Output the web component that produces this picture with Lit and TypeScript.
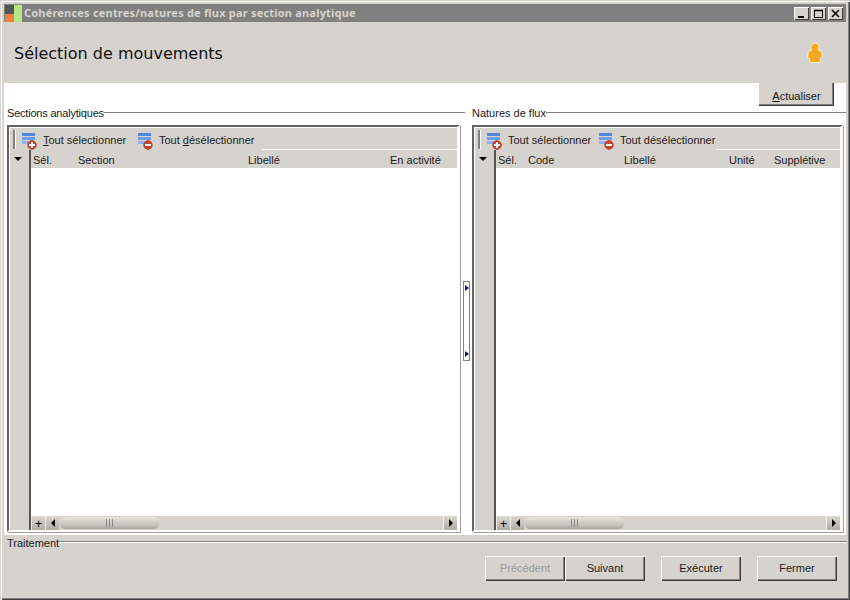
import { LitElement, html, css, svg } from "lit";
import { customElement } from "lit/decorators.js";

const addIcon = (kind: "plus" | "minus") => svg`
  <svg class="tool-icon" width="16" height="17" viewBox="0 0 16 17">
    <rect x="0" y="0" width="13" height="3" fill="#4f86e0"/>
    <rect x="0" y="4" width="13" height="3" fill="#6f9cec"/>
    <rect x="0" y="8" width="7" height="3" fill="#8fb2f0"/>
    <circle cx="10" cy="12" r="4.400" fill="#c8442a" stroke="#a83a20" stroke-width="0.6"/>
    <rect x="7" y="11" width="6" height="2" fill="#fff"/>
    ${kind === "plus" ? svg`<rect x="9" y="9" width="2" height="6" fill="#fff"/>` : ""}
  </svg>`;

@customElement("app-root")
export class AppRoot extends LitElement {
  static styles = css`
    :host { display: block; width: 850px; height: 600px; font-family: "Liberation Sans", sans-serif; font-size: 11px; color: #1a1a1a; }
    * { box-sizing: border-box; }
    .window {
      width: 850px; height: 600px; background: #d6d3ce; padding: 4px 4px 3px 4px;
      display: flex; flex-direction: column;
      box-shadow: inset 1px 1px #d6d3ce, inset 2px 2px #fff, inset -1px -1px #404040, inset -2px -2px #808080;
    }
    .titlebar { height: 18px; background: #808080; display: flex; align-items: center; flex: none; }
    .app-icon { flex: none; margin: 0 2px 0 1px; }
    .title { flex: 1; font: bold 11px "Noto Sans", sans-serif; letter-spacing: 0.2px; color: #d6d3ce; white-space: nowrap; padding-bottom: 2px; }
    .controls { display: flex; gap: 2px; margin-right: 3px; }
    .ctl { width: 15px; height: 13px; background: #d6d3ce; display: flex; align-items: center; justify-content: center; box-shadow: inset 1px 1px #fff, inset -1px -1px #404040; }
    .head { height: 61px; flex: none; display: flex; align-items: center; justify-content: space-between; padding: 0 22px 0 10px; }
    .head h1 { margin: 1px 0 0 0; font: normal 16px "DejaVu Sans", sans-serif; color: #111; }
    .body { height: 452px; flex: none; background: #fff; display: flex; flex-direction: column; }
    .actions { height: 23px; flex: none; display: flex; justify-content: flex-end; padding-right: 12px; }
    .btn { font: inherit; color: #1a1a1a; background: #d6d3ce; border: 0; padding: 0; display: flex; align-items: center; justify-content: center; }
    .u { text-decoration: underline; }
    .refresh { width: 75px; height: 23px; padding-top: 2px; box-shadow: inset -1px -1px #404040, inset -2px -2px #808080; }
    .panels { flex: 1; display: grid; grid-template-columns: 459px 7px 1fr; grid-template-rows: 19px 1fr; }
    .legend { display: flex; align-items: flex-start; white-space: nowrap; }
    .legend .rule { flex: 1; height: 1px; background: #808080; margin-top: 6px; }
    .legend.left { padding-left: 3px; margin-right: -2px; letter-spacing: -0.2px; }
    .legend.right { grid-column: 3; padding-left: 2px; }
    .frame {
      background: #d6d3ce; display: grid; grid-template-columns: 21px 1fr; grid-template-rows: 22px 18px 1fr; min-height: 0;
      border-top: 2px solid #646464; border-left: 2px solid #646464; border-right: 3px solid #fff; border-bottom: 2px solid #fff;
      padding: 1px 0 0 1px; background-clip: padding-box;
      box-shadow: 1px 1px #a0a0a0, inset 1px 1px #fff; height: 407px;
    }
    .frame.left { margin: 0 3px; }
    .frame.right { margin: 0 3px 0 2px; grid-column: 3; }
    .toolbar { grid-column: 1 / 3; display: flex; align-items: center; padding: 2px 0 0 3px; position: relative; white-space: nowrap; }
    .grip { height: 19px; background: #808080; border-right: 1px solid #fff; width: 3px; margin: -2px 6px 0 0; flex: none; }
    .tool { display: flex; align-items: center; gap: 5px; }
    .tool.a { width: 116px; }
    .frame.right .tool.a { width: 112px; }
    .tool .tool-icon { margin-top: 2px; flex: none; }
    .toolbar .fill { position: absolute; bottom: 0; right: 0; height: 1px; background: #fff; }
    .fill.l { left: 252px; }
    .fill.r { left: 241px; }
    .gutter { grid-row: 2 / 4; border-right: 2px solid #555; padding: 7px 0 0 4px; }
    .tri { width: 0; height: 0; border-left: 4px solid transparent; border-right: 4px solid transparent; border-top: 4px solid #000; }
    .cols { height: 18px; flex: none; display: grid; align-items: center; padding: 2px 0 0 2px; white-space: nowrap; }
    .cols.l { grid-template-columns: 45px 170px 142px 1fr; }
    .cols.r { grid-template-columns: 30px 96px 105px 45px 1fr; }
    .rows-wrap { grid-column: 2; background: #fff; display: flex; flex-direction: column; min-height: 0; }
    .rows { flex: 1; background: #fff; }
    .scroll { height: 14px; flex: none; background: #d6d3ce; display: flex; align-items: stretch; }
    .sbtn { width: 14px; flex: none; background: linear-gradient(#dcd9d2, #b0aca4); border-left: 1px solid #eee; display: flex; align-items: center; justify-content: center; font: 13px "Liberation Sans", sans-serif; color: #000; }
    .tl { width: 0; height: 0; border-top: 4px solid transparent; border-bottom: 4px solid transparent; border-right: 4px solid #000; }
    .tr { width: 0; height: 0; border-top: 4px solid transparent; border-bottom: 4px solid transparent; border-left: 4px solid #000; }
    .thumb { width: 99px; margin-left: 1px; flex: none; border-radius: 5px; background: linear-gradient(#e6e4de, #c4c0b8 70%, #a8a49c); display: flex; align-items: center; justify-content: center; gap: 2px; margin-top: 1px; height: 12px; }
    .thumb i { width: 1px; height: 8px; background: #8a8a8a; }
    .track { flex: 1; }
    .splitter { grid-row: 2; grid-column: 2; align-self: start; margin-top: 156px; width: 7px; height: 80px; border: 1px solid #808080; background: #fff; display: flex; flex-direction: column; justify-content: space-between; padding: 3px 0 3px 1px; }
    .nav { width: 0; height: 0; border-top: 3px solid transparent; border-bottom: 3px solid transparent; border-left: 4px solid #101060; }
    .foot { flex: 1; display: flex; flex-direction: column; }
    .foot .legend { height: 16px; padding-left: 3px; align-items: center; }
    .foot .rule { margin: -2px -1px 0 0; height: 2px; background: linear-gradient(#808080 50%, #fff 50%); }
    .foot-buttons { display: flex; justify-content: flex-end; margin-top: 5px; padding-right: 9px; }
    .fbtn { width: 80px; height: 25px; padding-bottom: 2px; box-shadow: inset 1px 1px #fff, inset -1px -1px #404040, inset -2px -2px #808080; }
    .fbtn + .fbtn { margin-left: 16px; }
    .fbtn.flush { margin-left: 0; }
    .fbtn:disabled { color: #9a9a94; }
    .legend-text { line-height: 14px; }
  `;

  private frame(side: "l" | "r", cols: string[], ul: boolean) {
    return html`
      <div class="frame ${side === "l" ? "left" : "right"}">
        <div class="toolbar">
          <div class="grip"></div>
          <div class="tool a">${addIcon("plus")}<span>${ul ? html`<span class="u">T</span>out sélectionner` : "Tout sélectionner"}</span></div>
          <div class="tool">${addIcon("minus")}<span>${ul ? html`Tout <span class="u">d</span>ésélectionner` : "Tout désélectionner"}</span></div>
          <div class="fill ${side}"></div>
        </div>
        <div class="gutter"><div class="tri"></div></div>
        <div class="cols ${side}">${cols.map((c) => html`<span>${c}</span>`)}</div>
        <div class="rows-wrap">
          <div class="rows"></div>
          <div class="scroll">
            <div class="sbtn">+</div>
            <div class="sbtn"><div class="tl"></div></div>
            <div class="thumb"><i></i><i></i><i></i></div>
            <div class="track"></div>
            <div class="sbtn"><div class="tr"></div></div>
          </div>
        </div>
      </div>`;
  }

  render() {
    return html`
      <div class="window">
        <div class="titlebar">
          <svg class="app-icon" width="17" height="17" viewBox="0 0 17 17">
            <rect x="0" y="0" width="9" height="9" fill="#555"/>
            <rect x="0" y="9" width="9" height="8" fill="#f08040"/>
            <rect x="9" y="0" width="8" height="17" fill="#b4e884"/>
          </svg>
          <div class="title">Cohérences centres/natures de flux par section analytique</div>
          <div class="controls">
            <div class="ctl"><svg width="9" height="9" viewBox="0 0 9 9"><rect x="1" y="7" width="6" height="2" fill="#000"/></svg></div>
            <div class="ctl"><svg width="11" height="9" viewBox="0 0 11 9"><path d="M1 1.500h9M1.500 1v7.500M9.500 1v7.500M1 8.500h9" stroke="#000" fill="none"/><path d="M1 1.500h9" stroke="#000" stroke-width="1.500" fill="none"/></svg></div>
            <div class="ctl"><svg width="9" height="9" viewBox="0 0 9 9"><path d="M1 1l7 7M8 1l-7 7" stroke="#000" stroke-width="1.500" fill="none"/></svg></div>
          </div>
        </div>
        <div class="head">
          <h1>Sélection de mouvements</h1>
          <svg width="18" height="22" viewBox="0 0 18 22">
            <path d="M9 1a4.200 4.200 0 0 1 3.200 6.900c2 .6 3.600 2 3.800 4.100l.4 3c.1 1-.9 1.600-2 1.200v2.800c0 1-.6 1.500-1.400 1.500H5c-.8 0-1.400-.5-1.400-1.500v-2.800c-1.100.4-2.100-.2-2-1.200l.4-3c.2-2.100 1.800-3.500 3.800-4.100A4.200 4.200 0 0 1 9 1z" fill="#f6a821" stroke="#fff3d8" stroke-width="1"/>
          </svg>
        </div>
        <div class="body">
          <div class="actions"><button class="btn refresh"><span><span class="u">A</span>ctualiser</span></button></div>
          <div class="panels">
            <div class="legend left"><span class="legend-text">Sections analytiques</span><div class="rule"></div></div>
            <div class="legend right"><span class="legend-text">Natures de flux</span><div class="rule"></div></div>
            ${this.frame("l", ["Sél.", "Section", "Libellé", "En activité"], true)}
            <div class="splitter"><div class="nav"></div><div class="nav"></div></div>
            ${this.frame("r", ["Sél.", "Code", "Libellé", "Unité", "Supplétive"], false)}
          </div>
        </div>
        <div class="foot">
          <div class="legend"><span class="legend-text">Traitement</span><div class="rule"></div></div>
          <div class="foot-buttons">
            <button class="btn fbtn" disabled>Précédent</button>
            <button class="btn fbtn flush">Suivant</button>
            <button class="btn fbtn">Exécuter</button>
            <button class="btn fbtn">Fermer</button>
          </div>
        </div>
      </div>`;
  }
}
